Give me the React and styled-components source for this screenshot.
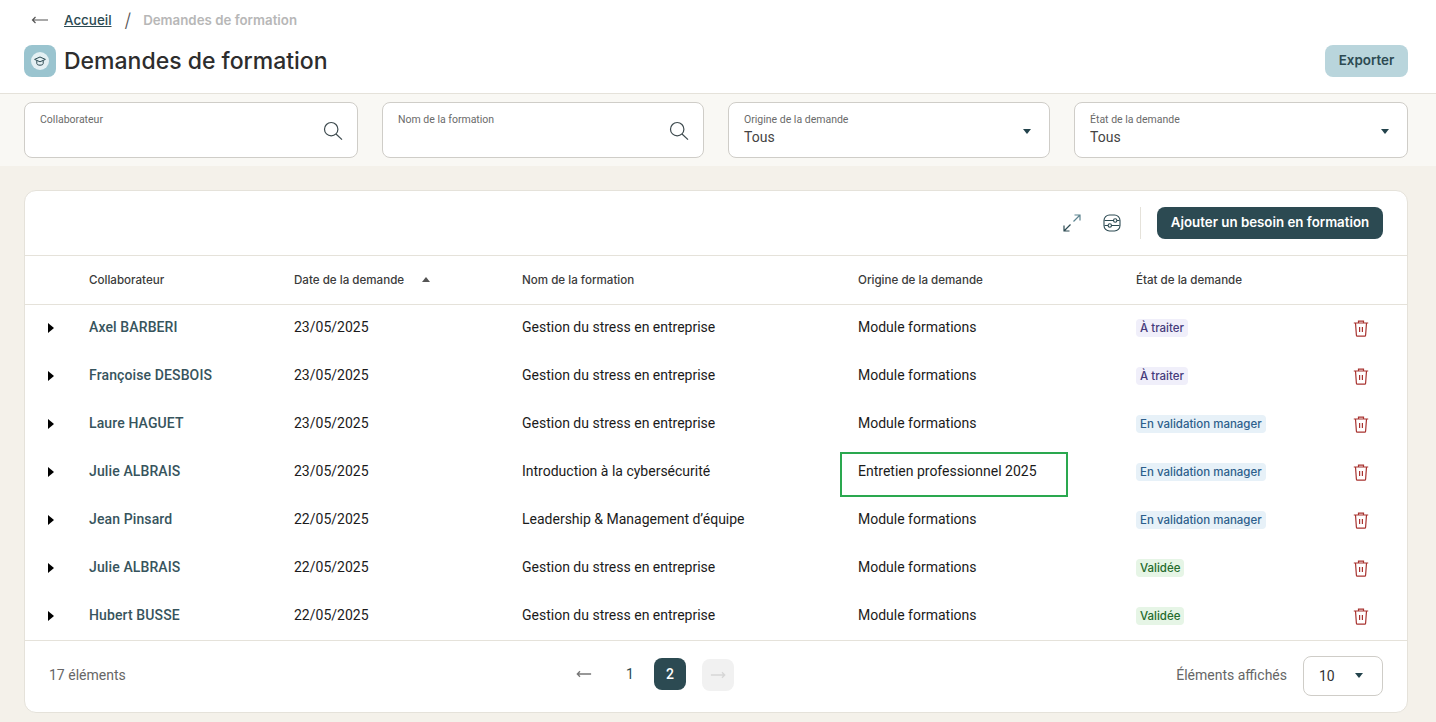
import React from "react";
import styled, { createGlobalStyle } from "styled-components";

const GlobalStyle = createGlobalStyle`
  * { box-sizing: border-box; }
  html, body { margin: 0; padding: 0; background: #f4f1ea; }
  body { font-family: Roboto, "Liberation Sans", sans-serif; color: #1b1b1b; }
`;

const HEAD_FONT = `Inter, "Noto Sans", sans-serif`;

const Page = styled.div`
  width: 1436px;
  height: 722px;
  overflow: hidden;
  background: #f4f1ea;
`;

const Header = styled.header`
  height: 94px;
  background: #fff;
  border-bottom: 1px solid #e5e2da;
  padding: 0 28px 0 24px;
`;

const Crumbs = styled.nav`
  display: flex;
  align-items: center;
  height: 40px;
  padding-left: 7px;
  font-family: ${HEAD_FONT};
  font-size: 13.4px;
  font-weight: 500;
`;

const CrumbLink = styled.a`
  margin-left: 15px;
  color: #2c4a52;
  text-decoration: underline;
`;

const CrumbSep = styled.span`
  margin: 0 12px 0 13px;
  color: #555;
  font-size: 19px;
  font-weight: 300;
`;

const CrumbCurrent = styled.span`
  color: #b7b7b7;
  font-size: 13.3px;
  font-weight: 600;
`;

const TitleRow = styled.div`
  display: flex;
  align-items: center;
  height: 32px;
  margin-top: 5px;
`;

const TitleIcon = styled.div`
  width: 32px;
  height: 32px;
  border-radius: 8px;
  background: #9ac4cf;
  display: flex;
  align-items: center;
  justify-content: center;
`;

const Title = styled.h1`
  flex: 1;
  margin: 0 0 0 8px;
  font-family: ${HEAD_FONT};
  font-size: 23px;
  font-weight: 500;
  color: #2d2d2d;
`;

const ExportButton = styled.button`
  width: 83px;
  height: 32px;
  border: 0;
  border-radius: 8px;
  padding: 0 0 2px;
  background: #b9d5dc;
  color: #2c4a52;
  font-family: ${HEAD_FONT};
  font-size: 13.4px;
  font-weight: 600;
`;

const Filters = styled.section`
  display: grid;
  grid-template-columns: 334px 322px 322px 334px;
  gap: 24px;
  height: 72px;
  padding: 8px 0 0 24px;
  background: #f9f8f4;
`;

const Field = styled.div`
  position: relative;
  height: 56px;
  background: #fff;
  border: 1px solid #cfcdc8;
  border-radius: 8px;
  padding: 10px 14px 8px 15px;
  display: flex;
  justify-content: space-between;
`;

const FieldText = styled.div`
  display: flex;
  flex-direction: column;
`;

const FieldLabel = styled.span`
  font-size: 10.5px;
  line-height: 14px;
  color: #6a6a6a;
`;

const FieldValue = styled.span`
  margin-top: 1px;
  font-size: 14px;
  line-height: 18px;
  color: #444;
`;

const FieldIcon = styled.span`
  display: flex;
  align-items: center;
  margin-right: ${(p) => p.$right || 0}px;
`;

const Caret = styled.span`
  display: inline-block;
  width: 0;
  height: 0;
  border-left: 4.5px solid transparent;
  border-right: 4.5px solid transparent;
  border-top: 5.5px solid #23434c;
`;

const Card = styled.main`
  width: 1384px;
  height: 523px;
  margin: 24px 0 0 24px;
  background: #fff;
  border: 1px solid #e5e2da;
  border-radius: 12px;
  display: flex;
  flex-direction: column;
`;

const Toolbar = styled.div`
  height: 65px;
  flex: none;
  display: flex;
  align-items: center;
  justify-content: flex-end;
  padding-right: 24px;
  border-bottom: 1px solid #e5e2da;
`;

const ToolIcon = styled.span`
  display: flex;
  margin-right: ${(p) => p.$gap}px;
`;

const ToolDivider = styled.span`
  width: 1px;
  height: 32px;
  margin-right: 16px;
  background: #e5e2da;
`;

const AddButton = styled.button`
  width: 226px;
  height: 32px;
  border: 0;
  border-radius: 8px;
  padding: 0 0 2px;
  background: #2c4a52;
  color: #fff;
  font-family: ${HEAD_FONT};
  font-size: 13.3px;
  font-weight: 600;
`;

const columns = "64px 205px 228px 336px 278px 1fr";

const HeadRow = styled.div`
  display: grid;
  grid-template-columns: ${columns};
  align-items: center;
  height: 49px;
  flex: none;
  border-bottom: 1px solid #e5e2da;
  font-family: ${HEAD_FONT};
  font-size: 11.6px;
  font-weight: 500;
  color: #3b3b3b;
`;

const SortCaret = styled.span`
  display: inline-block;
  width: 0;
  height: 0;
  margin-left: 18px;
  vertical-align: 2px;
  border-left: 4.5px solid transparent;
  border-right: 4.5px solid transparent;
  border-bottom: 5px solid #555;
`;

const Body = styled.div`
  flex: 1;
  margin-top: -1px;
`;

const Row = styled.div`
  display: grid;
  grid-template-columns: ${columns};
  align-items: center;
  height: 48px;
  font-size: 14px;
  color: #1b1b1b;
`;

const Cell = styled.span`
  padding-bottom: 2px;
`;

const Expand = styled.span`
  justify-self: start;
  margin-left: 23px;
  width: 0;
  height: 0;
  border-top: 5px solid transparent;
  border-bottom: 5px solid transparent;
  border-left: 6px solid #000;
`;

const Name = styled(Cell)`
  color: #37545d;
  font-weight: 500;
  letter-spacing: 0.12px;
`;

const OriginCell = styled(Cell)`
  position: relative;
`;

const Highlight = styled.span`
  position: absolute;
  left: -18px;
  top: -11px;
  width: 228px;
  height: 45px;
  border: 2px solid #2aa84f;
`;

const StatusCell = styled.div`
  display: flex;
  align-items: center;
  justify-content: space-between;
  padding-right: 38px;
`;

const tones = {
  todo: { bg: "#f0effa", fg: "#453a7a" },
  manager: { bg: "#e7f1f8", fg: "#2d5f8c" },
  done: { bg: "#e6f5e6", fg: "#256b2c" },
};

const Badge = styled.span`
  padding: 0 4px;
  height: 18px;
  line-height: 18px;
  border-radius: 4px;
  font-family: ${HEAD_FONT};
  font-size: 11.5px;
  font-weight: 500;
  background: ${(p) => tones[p.$tone].bg};
  color: ${(p) => tones[p.$tone].fg};
`;

const Footer = styled.footer`
  height: 72px;
  flex: none;
  display: grid;
  grid-template-columns: 519px auto 1fr;
  align-items: center;
  padding: 0 24px 2px;
  border-top: 1px solid #e5e2da;
  font-size: 14px;
  color: #666;
`;

const Count = styled.span`
  padding-bottom: 2px;
`;

const Pager = styled.div`
  display: flex;
  align-items: flex-start;
  margin-bottom: 2px;
`;

const PageBtn = styled.span`
  width: 32px;
  height: 32px;
  margin-left: ${(p) => p.$gap || 0}px;
  margin-top: ${(p) => (p.$disabled ? 1 : 0)}px;
  border-radius: 8px;
  display: flex;
  align-items: center;
  justify-content: center;
  font-size: 14px;
  font-weight: ${(p) => (p.$active ? 500 : 400)};
  background: ${(p) => (p.$active ? "#2c4a52" : p.$disabled ? "#f1f1f1" : "transparent")};
  color: ${(p) => (p.$active ? "#fff" : "#2c4a52")};
`;

const PerPage = styled.div`
  display: flex;
  align-items: center;
  justify-content: flex-end;
  gap: 16px;
`;

const PerPageLabel = styled.span`
  padding-bottom: 2px;
`;

const PerPageSelect = styled.div`
  width: 80px;
  height: 40px;
  border: 1px solid #cfcdc8;
  border-radius: 8px;
  padding: 0 19px 0 15px;
  display: flex;
  align-items: center;
  justify-content: space-between;
  color: #333;
`;

const Arrow = ({ left, color = "#666", width = 18, weight = 1.2 }) => (
  <svg width={width} height="10" viewBox="0 0 18 10" fill="none" stroke={color} strokeWidth={weight}>
    {left ? <path d="M17 5H1.5M4.5 2L1.5 5l3 3" /> : <path d="M1 5h15.5M13.5 2l3 3-3 3" />}
  </svg>
);

const SearchIcon = () => (
  <svg width="20" height="20" viewBox="0 0 20 20" fill="none" stroke="#3d4a4e" strokeWidth="1.2">
    <circle cx="8.2" cy="8.2" r="6.7" />
    <path d="M13 13l6 5.6" />
  </svg>
);

const CapIcon = () => (
  <svg width="20" height="20" viewBox="0 0 20 20" fill="none">
    <circle cx="10" cy="10" r="9" fill="#e4f0f3" />
    <path d="M4.6 8.4L10 6l5.4 2.4L10 10.8z M6.8 9.6v3c0 .9 1.4 1.6 3.2 1.6s3.2-.7 3.2-1.6v-3" stroke="#2c4a52" strokeWidth="1" strokeLinejoin="round" />
  </svg>
);

const ExpandIcon = () => (
  <svg width="18" height="18" viewBox="0 0 18 18" fill="none" strokeWidth="1.2">
    <path d="M10.5 7.5L17 1M11.5 1H17V6.5" stroke="#5d8490" />
    <path d="M7.5 10.5L1 17M1 11.5V17H6.5" stroke="#2c4a52" />
  </svg>
);

const SlidersIcon = () => (
  <svg width="18" height="18" viewBox="0 0 18 18" fill="none" stroke="#2c4a52" strokeWidth="1.1">
    <rect x="1" y="1" width="16" height="16" rx="5.5" />
    <path d="M1.5 6.5H10.5M14 6.5h2.5M1.5 11.5H5M8.5 11.5H16.5" />
    <circle cx="12.2" cy="6.5" r="1.7" />
    <circle cx="6.8" cy="11.5" r="1.7" />
  </svg>
);

const TrashIcon = () => (
  <svg width="16" height="17" viewBox="0 0 16 17" fill="none" stroke="#a8322f" strokeWidth="1.2">
    <path d="M.8 3h14.4M5.5 3V1.2h5V3M2.5 3l.9 12.2c0 .6.5 1 1 1h7.2c.5 0 1-.4 1-1L13.5 3M6.6 7v5M9.4 7v5" />
  </svg>
);

const rows = [
  ["Axel BARBERI", "23/05/2025", "Gestion du stress en entreprise", "Module formations", "todo", "À traiter"],
  ["Françoise DESBOIS", "23/05/2025", "Gestion du stress en entreprise", "Module formations", "todo", "À traiter"],
  ["Laure HAGUET", "23/05/2025", "Gestion du stress en entreprise", "Module formations", "manager", "En validation manager"],
  ["Julie ALBRAIS", "23/05/2025", "Introduction à la cybersécurité", "Entretien professionnel 2025", "manager", "En validation manager", true],
  ["Jean Pinsard", "22/05/2025", "Leadership & Management d’équipe", "Module formations", "manager", "En validation manager"],
  ["Julie ALBRAIS", "22/05/2025", "Gestion du stress en entreprise", "Module formations", "done", "Validée"],
  ["Hubert BUSSE", "22/05/2025", "Gestion du stress en entreprise", "Module formations", "done", "Validée"],
];

const App = () => {
  return (
    <>
      <GlobalStyle />
      <Page>
        <Header>
          <Crumbs>
            <Arrow left color="#555" />
            <CrumbLink>Accueil</CrumbLink>
            <CrumbSep>/</CrumbSep>
            <CrumbCurrent>Demandes de formation</CrumbCurrent>
          </Crumbs>
          <TitleRow>
            <TitleIcon>
              <CapIcon />
            </TitleIcon>
            <Title>Demandes de formation</Title>
            <ExportButton>Exporter</ExportButton>
          </TitleRow>
        </Header>

        <Filters>
          <Field>
            <FieldText>
              <FieldLabel>Collaborateur</FieldLabel>
            </FieldText>
            <FieldIcon><SearchIcon /></FieldIcon>
          </Field>
          <Field>
            <FieldText>
              <FieldLabel>Nom de la formation</FieldLabel>
            </FieldText>
            <FieldIcon><SearchIcon /></FieldIcon>
          </Field>
          <Field>
            <FieldText>
              <FieldLabel>Origine de la demande</FieldLabel>
              <FieldValue>Tous</FieldValue>
            </FieldText>
            <FieldIcon $right={4}><Caret /></FieldIcon>
          </Field>
          <Field>
            <FieldText>
              <FieldLabel>État de la demande</FieldLabel>
              <FieldValue>Tous</FieldValue>
            </FieldText>
            <FieldIcon $right={4}><Caret /></FieldIcon>
          </Field>
        </Filters>

        <Card>
          <Toolbar>
            <ToolIcon $gap={22}><ExpandIcon /></ToolIcon>
            <ToolIcon $gap={19}><SlidersIcon /></ToolIcon>
            <ToolDivider />
            <AddButton>Ajouter un besoin en formation</AddButton>
          </Toolbar>
          <HeadRow>
            <span />
            <span>Collaborateur</span>
            <span>Date de la demande<SortCaret /></span>
            <span>Nom de la formation</span>
            <span>Origine de la demande</span>
            <span>État de la demande</span>
          </HeadRow>
          <Body>
            {rows.map((r, i) => (
              <Row key={i}>
                <Expand />
                <Name>{r[0]}</Name>
                <Cell>{r[1]}</Cell>
                <Cell>{r[2]}</Cell>
                <OriginCell>
                  {r[3]}
                  {r[6] && <Highlight />}
                </OriginCell>
                <StatusCell>
                  <Badge $tone={r[4]}>{r[5]}</Badge>
                  <TrashIcon />
                </StatusCell>
              </Row>
            ))}
          </Body>
          <Footer>
            <Count>17 éléments</Count>
            <Pager>
              <PageBtn><Arrow left color="#777" width={16} weight={1.5} /></PageBtn>
              <PageBtn $gap={14}>1</PageBtn>
              <PageBtn $gap={8} $active>2</PageBtn>
              <PageBtn $gap={16} $disabled><Arrow color="#d6d6d6" width={16} weight={1.5} /></PageBtn>
            </Pager>
            <PerPage>
              <PerPageLabel>Éléments affichés</PerPageLabel>
              <PerPageSelect>
                10
                <Caret />
              </PerPageSelect>
            </PerPage>
          </Footer>
        </Card>
      </Page>
    </>
  );
};

export default App;
